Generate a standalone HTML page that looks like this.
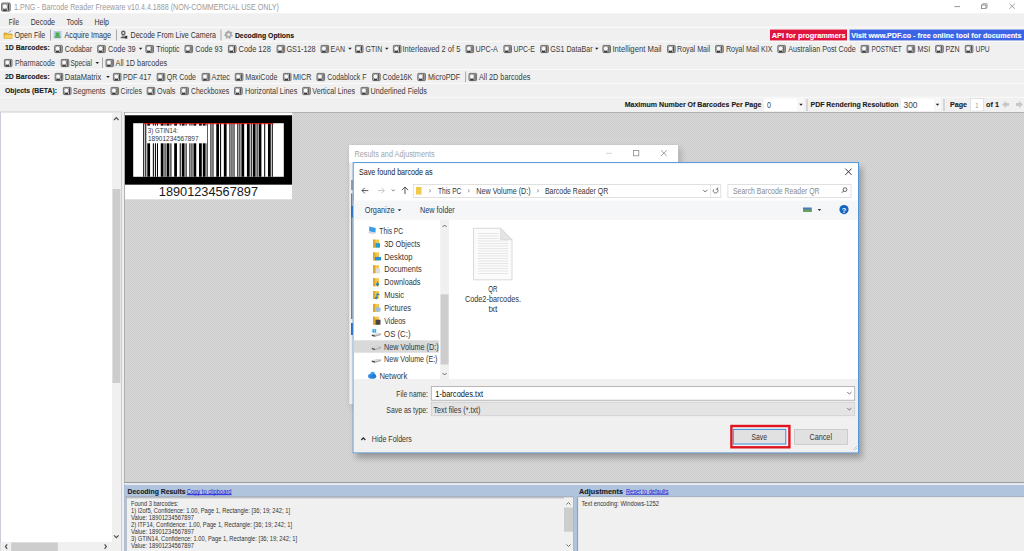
<!DOCTYPE html>
<html><head><meta charset="utf-8"><title>Barcode Reader</title>
<style>html,body{margin:0;padding:0;width:1024px;height:551px;overflow:hidden;background:#f0f0f0;}
svg text{font-family:"Liberation Sans",sans-serif;}</style></head><body>
<svg width="1024" height="551" viewBox="0 0 1024 551" style="display:block">
<defs>
<g id="bci">
 <rect x="0.4" y="0.4" width="7.6" height="7.2" rx="0.8" fill="#c4c4c4" stroke="#4a4a4a" stroke-width="0.75"/>
 <circle cx="3.3" cy="3.5" r="2.4" fill="#f8f8f8" stroke="#6a6a6a" stroke-width="0.6"/>
 <rect x="6" y="1.1" width="0.9" height="5.8" fill="#3a3a3a"/>
 <rect x="1.6" y="6.1" width="3.4" height="1.2" fill="#2a2a2a"/>
</g>
<pattern id="chk" width="2" height="2" patternUnits="userSpaceOnUse">
 <rect width="2" height="2" fill="#d9d9d9"/>
 <rect width="1" height="1" fill="#cbcbcb"/><rect x="1" y="1" width="1" height="1" fill="#cbcbcb"/>
</pattern>
<filter id="sh" x="-10%" y="-10%" width="120%" height="120%"><feGaussianBlur stdDeviation="3"/></filter>
</defs>
<rect x="0" y="0" width="1024" height="13.5" fill="#ffffff" />
<use href="#bci" transform="translate(1.2,2.6) scale(1.12)"/>
<text x="14" y="10.2" font-size="8.6" fill="#9a9a9a" textLength="265.0" lengthAdjust="spacingAndGlyphs" font-family="Liberation Sans" >1.PNG - Barcode Reader Freeware v10.4.4.1888 (NON-COMMERCIAL USE ONLY)</text>
<line x1="954.4" y1="6.6" x2="960" y2="6.6" stroke="#8a8a8a" stroke-width="0.9" />
<path d="M982.8,4.8 L982.8,3.8 L987.1,3.8 L987.1,7.6 L986.2,7.6" fill="none" stroke="#8a8a8a" stroke-width="0.8"/><rect x="981.5" y="5" width="4.4" height="3.6" fill="none" stroke="#8a8a8a" stroke-width="0.9"/>
<path d="M1009.4,3.6 L1015,8.8 M1015,3.6 L1009.4,8.8" stroke="#8a8a8a" stroke-width="0.8"/>
<rect x="0" y="13.5" width="1024" height="98.5" fill="#f0f0f0" />
<text x="8.8" y="24.6" font-size="8.2" fill="#353535" textLength="10.2" lengthAdjust="spacingAndGlyphs" font-family="Liberation Sans" >File</text>
<text x="30.8" y="24.6" font-size="8.2" fill="#353535" textLength="24.2" lengthAdjust="spacingAndGlyphs" font-family="Liberation Sans" >Decode</text>
<text x="66.6" y="24.6" font-size="8.2" fill="#353535" textLength="16.2" lengthAdjust="spacingAndGlyphs" font-family="Liberation Sans" >Tools</text>
<text x="94.5" y="24.6" font-size="8.2" fill="#353535" textLength="14.5" lengthAdjust="spacingAndGlyphs" font-family="Liberation Sans" >Help</text>
<rect x="0" y="26.7" width="1024" height="1" fill="#fbfbfb" />
<rect x="0" y="40.9" width="1024" height="1" fill="#fbfbfb" />
<rect x="0" y="68.9" width="1024" height="1" fill="#fbfbfb" />
<rect x="0" y="83.0" width="1024" height="1" fill="#fbfbfb" />
<rect x="0" y="96.8" width="1024" height="1" fill="#fbfbfb" />
<g transform="translate(3.5,30)"><path d="M0.5,3 L3.5,3 L4.5,4 L8.5,4 L8.5,8.5 L0.5,8.5 Z" fill="#e8b830" stroke="#b08010" stroke-width="0.5"/><path d="M1.5,5 L9.5,5 L8.5,8.5 L0.5,8.5 Z" fill="#f5d060"/><path d="M5,2.5 L8,0.5" stroke="#8aa0c8" stroke-width="1"/></g>
<text x="14.6" y="38" font-size="8.5" fill="#333" textLength="30.7" lengthAdjust="spacingAndGlyphs" font-family="Liberation Sans" >Open File</text>
<line x1="50.5" y1="29.5" x2="50.5" y2="40.5" stroke="#a8a8a8" stroke-width="1" />
<g transform="translate(53.5,31)"><rect x="0" y="0" width="8" height="7.5" fill="#b8cce8"/><rect x="2" y="1.5" width="4" height="4" fill="#48b048"/><rect x="1" y="5.5" width="6" height="1.2" fill="#3a9a3a"/></g>
<text x="64.5" y="38" font-size="8.5" fill="#333" textLength="46.5" lengthAdjust="spacingAndGlyphs" font-family="Liberation Sans" >Acquire Image</text>
<line x1="116.5" y1="29.5" x2="116.5" y2="40.5" stroke="#a8a8a8" stroke-width="1" />
<g transform="translate(120,30.3)"><circle cx="3.3" cy="2.6" r="2.3" fill="#606060"/><circle cx="3.3" cy="2.6" r="1" fill="#e8e8e8"/><path d="M1.5,5 L5,5 L4.3,6.5 L2.2,6.5 Z" fill="#888"/><rect x="0.8" y="6.6" width="5" height="1.3" fill="#505050"/><rect x="4.8" y="5.5" width="2.5" height="2.8" fill="#3a3a3a"/></g>
<text x="130.5" y="38" font-size="8.5" fill="#333" textLength="85.5" lengthAdjust="spacingAndGlyphs" font-family="Liberation Sans" >Decode From Live Camera</text>
<line x1="221" y1="29.5" x2="221" y2="40.5" stroke="#a8a8a8" stroke-width="1" />
<g transform="translate(228.6,34.6)"><path d="M-0.8,-4.2 H0.8 L1.1,-3 L2.3,-2.5 L3.3,-3.2 L3.9,-2.1 L3.1,-1.2 L3.2,0 L4.2,0.8 L3.8,1.9 L2.6,1.8 L1.8,2.8 L2.1,4 L0.8,4.3 L0.2,3.2 L-1,3.2 L-1.7,4.2 L-2.9,3.6 L-2.6,2.4 L-3.4,1.5 L-4.3,1.2 L-4.2,0 L-3.2,-0.6 L-3.4,-1.8 L-2.6,-2.8 L-1.4,-2.9 Z" fill="#a8a8a8"/><circle r="1.7" fill="#e4e4e4"/></g>
<text x="234.9" y="37.7" font-size="8.0" fill="#111" font-weight="bold" stroke="#111" stroke-width="0.1" textLength="59.1" lengthAdjust="spacingAndGlyphs" font-family="Liberation Sans" >Decoding Options</text>
<rect x="770" y="29.6" width="77" height="10.8" fill="#e0143c" />
<text x="771.8" y="38.1" font-size="7.5" fill="#ffffff" font-weight="bold" stroke="#ffffff" stroke-width="0.1" textLength="73.7" lengthAdjust="spacingAndGlyphs" font-family="Liberation Sans" >API for programmers</text>
<rect x="849.6" y="29.6" width="174.4" height="10.8" fill="#3c64e6" />
<text x="851.3" y="38.1" font-size="7.5" fill="#ffffff" font-weight="bold" stroke="#ffffff" stroke-width="0.1" textLength="170.2" lengthAdjust="spacingAndGlyphs" font-family="Liberation Sans" >Visit www.PDF.co - free online tool for documents</text>
<text x="5" y="49.8" font-size="7.3" fill="#1a1a1a" font-weight="bold" stroke="#1a1a1a" stroke-width="0.1" textLength="44.8" lengthAdjust="spacingAndGlyphs" font-family="Liberation Sans" >1D Barcodes:</text>
<use href="#bci" x="54.3" y="45.0"/>
<text x="64.8" y="51.7" font-size="8.5" fill="#3a3a3a" textLength="27.4" lengthAdjust="spacingAndGlyphs" font-family="Liberation Sans" >Codabar</text>
<use href="#bci" x="97.3" y="45.0"/>
<text x="108" y="51.7" font-size="8.5" fill="#3a3a3a" textLength="27.7" lengthAdjust="spacingAndGlyphs" font-family="Liberation Sans" >Code 39</text>
<path d="M138.79999999999998,47.7 L142.4,47.7 L140.6,49.7 Z" fill="#222"/>
<use href="#bci" x="145.5" y="45.0"/>
<text x="156.25" y="51.7" font-size="8.5" fill="#3a3a3a" textLength="23.4" lengthAdjust="spacingAndGlyphs" font-family="Liberation Sans" >Trioptic</text>
<use href="#bci" x="184.6" y="45.0"/>
<text x="195.3" y="51.7" font-size="8.5" fill="#3a3a3a" textLength="27.3" lengthAdjust="spacingAndGlyphs" font-family="Liberation Sans" >Code 93</text>
<use href="#bci" x="228" y="45.0"/>
<text x="238.5" y="51.7" font-size="8.5" fill="#3a3a3a" textLength="32.3" lengthAdjust="spacingAndGlyphs" font-family="Liberation Sans" >Code 128</text>
<use href="#bci" x="276.7" y="45.0"/>
<text x="286.4" y="51.7" font-size="8.5" fill="#3a3a3a" textLength="29.2" lengthAdjust="spacingAndGlyphs" font-family="Liberation Sans" >GS1-128</text>
<use href="#bci" x="320.6" y="45.0"/>
<text x="330.6" y="51.7" font-size="8.5" fill="#3a3a3a" textLength="14.4" lengthAdjust="spacingAndGlyphs" font-family="Liberation Sans" >EAN</text>
<path d="M348.2,47.7 L351.8,47.7 L350,49.7 Z" fill="#222"/>
<use href="#bci" x="355" y="45.0"/>
<text x="365.6" y="51.7" font-size="8.5" fill="#3a3a3a" textLength="16.6" lengthAdjust="spacingAndGlyphs" font-family="Liberation Sans" >GTIN</text>
<path d="M385.0,47.7 L388.6,47.7 L386.8,49.7 Z" fill="#222"/>
<use href="#bci" x="393" y="45.0"/>
<text x="402.5" y="51.7" font-size="8.5" fill="#3a3a3a" textLength="57.8" lengthAdjust="spacingAndGlyphs" font-family="Liberation Sans" >Interleaved 2 of 5</text>
<use href="#bci" x="465.6" y="45.0"/>
<text x="475.5" y="51.7" font-size="8.5" fill="#3a3a3a" textLength="22.3" lengthAdjust="spacingAndGlyphs" font-family="Liberation Sans" >UPC-A</text>
<use href="#bci" x="503.5" y="45.0"/>
<text x="513.4" y="51.7" font-size="8.5" fill="#3a3a3a" textLength="21.6" lengthAdjust="spacingAndGlyphs" font-family="Liberation Sans" >UPC-E</text>
<use href="#bci" x="540.3" y="45.0"/>
<text x="550.3" y="51.7" font-size="8.5" fill="#3a3a3a" textLength="42.2" lengthAdjust="spacingAndGlyphs" font-family="Liberation Sans" >GS1 DataBar</text>
<path d="M595.0,47.7 L598.5999999999999,47.7 L596.8,49.7 Z" fill="#222"/>
<use href="#bci" x="602.5" y="45.0"/>
<text x="612.4" y="51.7" font-size="8.5" fill="#3a3a3a" textLength="49.2" lengthAdjust="spacingAndGlyphs" font-family="Liberation Sans" >Intelligent Mail</text>
<use href="#bci" x="667.2" y="45.0"/>
<text x="677" y="51.7" font-size="8.5" fill="#3a3a3a" textLength="33.2" lengthAdjust="spacingAndGlyphs" font-family="Liberation Sans" >Royal Mail</text>
<use href="#bci" x="715.3" y="45.0"/>
<text x="726" y="51.7" font-size="8.5" fill="#3a3a3a" textLength="46.4" lengthAdjust="spacingAndGlyphs" font-family="Liberation Sans" >Royal Mail KIX</text>
<use href="#bci" x="777.4" y="45.0"/>
<text x="788.2" y="51.7" font-size="8.5" fill="#3a3a3a" textLength="67.5" lengthAdjust="spacingAndGlyphs" font-family="Liberation Sans" >Australian Post Code</text>
<use href="#bci" x="860.7" y="45.0"/>
<text x="871.5" y="51.7" font-size="8.5" fill="#3a3a3a" textLength="30.2" lengthAdjust="spacingAndGlyphs" font-family="Liberation Sans" >POSTNET</text>
<use href="#bci" x="906.7" y="45.0"/>
<text x="917.5" y="51.7" font-size="8.5" fill="#3a3a3a" textLength="12.7" lengthAdjust="spacingAndGlyphs" font-family="Liberation Sans" >MSI</text>
<use href="#bci" x="935.3" y="45.0"/>
<text x="945.4" y="51.7" font-size="8.5" fill="#3a3a3a" textLength="14.1" lengthAdjust="spacingAndGlyphs" font-family="Liberation Sans" >PZN</text>
<use href="#bci" x="964.9" y="45.0"/>
<text x="975.6" y="51.7" font-size="8.5" fill="#3a3a3a" textLength="14.1" lengthAdjust="spacingAndGlyphs" font-family="Liberation Sans" >UPU</text>
<use href="#bci" x="4" y="59.0"/>
<text x="15" y="65.9" font-size="8.5" fill="#3a3a3a" textLength="39.8" lengthAdjust="spacingAndGlyphs" font-family="Liberation Sans" >Pharmacode</text>
<use href="#bci" x="60.8" y="59.0"/>
<text x="70.4" y="65.9" font-size="8.5" fill="#3a3a3a" textLength="21.6" lengthAdjust="spacingAndGlyphs" font-family="Liberation Sans" >Special</text>
<path d="M95.5,61.900000000000006 L99.1,61.900000000000006 L97.3,63.900000000000006 Z" fill="#222"/>
<use href="#bci" x="105.6" y="59.0"/>
<text x="115.6" y="65.9" font-size="8.5" fill="#3a3a3a" textLength="51.5" lengthAdjust="spacingAndGlyphs" font-family="Liberation Sans" >All 1D barcodes</text>
<line x1="102.5" y1="57.5" x2="102.5" y2="68" stroke="#a8a8a8" stroke-width="1" />
<text x="5" y="79" font-size="7.3" fill="#1a1a1a" font-weight="bold" stroke="#1a1a1a" stroke-width="0.1" textLength="44.8" lengthAdjust="spacingAndGlyphs" font-family="Liberation Sans" >2D Barcodes:</text>
<use href="#bci" x="54.8" y="73.0"/>
<text x="64.8" y="79.9" font-size="8.5" fill="#3a3a3a" textLength="36.5" lengthAdjust="spacingAndGlyphs" font-family="Liberation Sans" >DataMatrix</text>
<path d="M106.2,75.9 L109.8,75.9 L108,77.9 Z" fill="#222"/>
<use href="#bci" x="113" y="73.0"/>
<text x="123" y="79.9" font-size="8.5" fill="#3a3a3a" textLength="28.2" lengthAdjust="spacingAndGlyphs" font-family="Liberation Sans" >PDF 417</text>
<use href="#bci" x="156.8" y="73.0"/>
<text x="166.8" y="79.9" font-size="8.5" fill="#3a3a3a" textLength="29.2" lengthAdjust="spacingAndGlyphs" font-family="Liberation Sans" >QR Code</text>
<use href="#bci" x="201.7" y="73.0"/>
<text x="211.6" y="79.9" font-size="8.5" fill="#3a3a3a" textLength="18.4" lengthAdjust="spacingAndGlyphs" font-family="Liberation Sans" >Aztec</text>
<use href="#bci" x="234.9" y="73.0"/>
<text x="245.2" y="79.9" font-size="8.5" fill="#3a3a3a" textLength="32.2" lengthAdjust="spacingAndGlyphs" font-family="Liberation Sans" >MaxiCode</text>
<use href="#bci" x="283" y="73.0"/>
<text x="293" y="79.9" font-size="8.5" fill="#3a3a3a" textLength="18.6" lengthAdjust="spacingAndGlyphs" font-family="Liberation Sans" >MICR</text>
<use href="#bci" x="316.6" y="73.0"/>
<text x="327.2" y="79.9" font-size="8.5" fill="#3a3a3a" textLength="39.4" lengthAdjust="spacingAndGlyphs" font-family="Liberation Sans" >Codablock F</text>
<use href="#bci" x="372.2" y="73.0"/>
<text x="382.5" y="79.9" font-size="8.5" fill="#3a3a3a" textLength="29.9" lengthAdjust="spacingAndGlyphs" font-family="Liberation Sans" >Code16K</text>
<use href="#bci" x="417.4" y="73.0"/>
<text x="428" y="79.9" font-size="8.5" fill="#3a3a3a" textLength="32.3" lengthAdjust="spacingAndGlyphs" font-family="Liberation Sans" >MicroPDF</text>
<use href="#bci" x="468.6" y="73.0"/>
<text x="478.9" y="79.9" font-size="8.5" fill="#3a3a3a" textLength="51.5" lengthAdjust="spacingAndGlyphs" font-family="Liberation Sans" >All 2D barcodes</text>
<line x1="465.6" y1="71.5" x2="465.6" y2="82" stroke="#a8a8a8" stroke-width="1" />
<text x="5" y="92.8" font-size="7.3" fill="#1a1a1a" font-weight="bold" stroke="#1a1a1a" stroke-width="0.1" textLength="52.0" lengthAdjust="spacingAndGlyphs" font-family="Liberation Sans" >Objects (BETA):</text>
<use href="#bci" x="63" y="87.0"/>
<text x="73" y="93.9" font-size="8.5" fill="#3a3a3a" textLength="32.3" lengthAdjust="spacingAndGlyphs" font-family="Liberation Sans" >Segments</text>
<use href="#bci" x="110.6" y="87.0"/>
<text x="120.6" y="93.9" font-size="8.5" fill="#3a3a3a" textLength="21.3" lengthAdjust="spacingAndGlyphs" font-family="Liberation Sans" >Circles</text>
<use href="#bci" x="146.8" y="87.0"/>
<text x="157.1" y="93.9" font-size="8.5" fill="#3a3a3a" textLength="18.3" lengthAdjust="spacingAndGlyphs" font-family="Liberation Sans" >Ovals</text>
<use href="#bci" x="180.4" y="87.0"/>
<text x="191" y="93.9" font-size="8.5" fill="#3a3a3a" textLength="38.2" lengthAdjust="spacingAndGlyphs" font-family="Liberation Sans" >Checkboxes</text>
<use href="#bci" x="234.2" y="87.0"/>
<text x="244.9" y="93.9" font-size="8.5" fill="#3a3a3a" textLength="52.4" lengthAdjust="spacingAndGlyphs" font-family="Liberation Sans" >Horizontal Lines</text>
<use href="#bci" x="302.3" y="87.0"/>
<text x="312.3" y="93.9" font-size="8.5" fill="#3a3a3a" textLength="42.7" lengthAdjust="spacingAndGlyphs" font-family="Liberation Sans" >Vertical Lines</text>
<use href="#bci" x="360.6" y="87.0"/>
<text x="370.6" y="93.9" font-size="8.5" fill="#3a3a3a" textLength="56.4" lengthAdjust="spacingAndGlyphs" font-family="Liberation Sans" >Underlined Fields</text>
<text x="624.7" y="107.3" font-size="7.3" fill="#1a1a1a" font-weight="bold" stroke="#1a1a1a" stroke-width="0.1" textLength="136.8" lengthAdjust="spacingAndGlyphs" font-family="Liberation Sans" >Maximum Number Of Barcodes Per Page</text>
<rect x="764" y="98.5" width="40" height="12.5" fill="#ffffff" />
<text x="767" y="107.8" font-size="8.2" fill="#444" textLength="4.0" lengthAdjust="spacingAndGlyphs" font-family="Liberation Sans" >0</text>
<rect x="797" y="98.5" width="7" height="12.5" fill="#f7f7f7" />
<path d="M799.2,103.8 L802.8,103.8 L801,105.8 Z" fill="#222"/>
<line x1="807" y1="99" x2="807" y2="111" stroke="#bdbdbd" stroke-width="1" />
<text x="810.5" y="107.3" font-size="7.3" fill="#1a1a1a" font-weight="bold" stroke="#1a1a1a" stroke-width="0.1" textLength="87.9" lengthAdjust="spacingAndGlyphs" font-family="Liberation Sans" >PDF Rendering Resolution</text>
<rect x="901" y="98.5" width="40" height="12.5" fill="#ffffff" />
<text x="903.5" y="107.8" font-size="8.2" fill="#444" textLength="14.0" lengthAdjust="spacingAndGlyphs" font-family="Liberation Sans" >300</text>
<rect x="934" y="98.5" width="7" height="12.5" fill="#f7f7f7" />
<path d="M935.7,103.8 L939.3,103.8 L937.5,105.8 Z" fill="#222"/>
<line x1="944" y1="99" x2="944" y2="111" stroke="#bdbdbd" stroke-width="1" />
<text x="950" y="107.3" font-size="7.3" fill="#1a1a1a" font-weight="bold" stroke="#1a1a1a" stroke-width="0.1" textLength="17.0" lengthAdjust="spacingAndGlyphs" font-family="Liberation Sans" >Page</text>
<rect x="970.5" y="98.5" width="13" height="12.5" fill="#ffffff" stroke="#dcdcdc" stroke-width="0.8"/>
<text x="975.3" y="107.8" font-size="7.5" fill="#999" textLength="3.2" lengthAdjust="spacingAndGlyphs" font-family="Liberation Sans" >1</text>
<text x="986" y="107.3" font-size="7.3" fill="#1a1a1a" font-weight="bold" stroke="#1a1a1a" stroke-width="0.1" textLength="13.0" lengthAdjust="spacingAndGlyphs" font-family="Liberation Sans" >of 1</text>
<path d="M1002,104.5 L1006,101 L1006,103 L1009,103 L1009,106 L1006,106 L1006,108 Z" fill="#c8c8c8"/>
<path d="M1023,104.5 L1019,101 L1019,103 L1016,103 L1016,106 L1019,106 L1019,108 Z" fill="#c8c8c8"/>
<rect x="0" y="111.5" width="1024" height="439.5" fill="#f0f0f0" />
<rect x="0" y="112" width="112" height="430.2" fill="#ffffff" />
<line x1="0" y1="112" x2="121.5" y2="112" stroke="#c9ced6" stroke-width="1" />
<line x1="0.5" y1="112" x2="0.5" y2="551" stroke="#c9ced6" stroke-width="1" />
<rect x="112" y="112.5" width="9" height="428" fill="#f0f0f0" />
<rect x="112.5" y="189" width="7.8" height="194" fill="#cdcdcd" />
<path d="M114,120 L116.3,117.7 L118.6,120" fill="none" stroke="#505050" stroke-width="1.2"/>
<path d="M114,535.3 L116.3,537.6 L118.6,535.3" fill="none" stroke="#505050" stroke-width="1.2"/>
<line x1="121.5" y1="112" x2="121.5" y2="551" stroke="#c9ced6" stroke-width="1" />
<rect x="0.5" y="542.2" width="111.5" height="9" fill="#f0f0f0" />
<rect x="11.2" y="542.5" width="46.6" height="8.5" fill="#cdcdcd" />
<path d="M7.2,544.3 L5.4,546.6 L7.2,548.9" fill="none" stroke="#505050" stroke-width="1.2"/>
<path d="M104.6,544.3 L106.4,546.6 L104.6,548.9" fill="none" stroke="#505050" stroke-width="1.2"/>
<rect x="124" y="112.5" width="900" height="370" fill="url(#chk)" />
<line x1="124" y1="112.5" x2="1024" y2="112.5" stroke="#b0b0b0" stroke-width="1" />
<line x1="124.5" y1="112.5" x2="124.5" y2="483" stroke="#8a8a8a" stroke-width="1" stroke-dasharray="1 1"/>
<line x1="124" y1="482.5" x2="1024" y2="482.5" stroke="#9c9c9c" stroke-width="1" />
<rect x="124" y="483" width="900" height="2" fill="#e6eaee" />
<rect x="125" y="112.8" width="167.3" height="2.6" fill="#ffffff" />
<rect x="125" y="115.3" width="167" height="69.5" fill="#000000" />
<rect x="133.2" y="123.2" width="150.6" height="53.6" fill="#ffffff" />
<rect x="125" y="184.8" width="167" height="14.5" fill="#ffffff" />
<text x="158.8" y="195.8" font-size="12.4" fill="#1a1a1a" textLength="99.2" lengthAdjust="spacingAndGlyphs" font-family="Liberation Sans" >18901234567897</text>
<path d="M143.20,123.2h1.03v53.6h-1.03z M145.25,123.2h1.03v53.6h-1.03z M147.30,123.2h2.77v53.6h-2.77z M152.85,123.2h1.03v53.6h-1.03z M154.90,123.2h1.03v53.6h-1.03z M156.95,123.2h1.03v53.6h-1.03z M160.75,123.2h2.77v53.6h-2.77z M164.54,123.2h1.03v53.6h-1.03z M166.60,123.2h2.77v53.6h-2.77z M170.39,123.2h1.03v53.6h-1.03z M174.19,123.2h2.77v53.6h-2.77z M179.73,123.2h1.03v53.6h-1.03z M181.78,123.2h2.77v53.6h-2.77z M185.58,123.2h1.03v53.6h-1.03z M189.38,123.2h1.03v53.6h-1.03z M191.43,123.2h1.03v53.6h-1.03z M193.48,123.2h2.77v53.6h-2.77z M199.02,123.2h2.77v53.6h-2.77z M202.82,123.2h2.77v53.6h-2.77z M206.61,123.2h1.03v53.6h-1.03z M210.41,123.2h1.03v53.6h-1.03z M212.46,123.2h1.03v53.6h-1.03z M216.26,123.2h2.77v53.6h-2.77z M220.06,123.2h1.03v53.6h-1.03z M223.85,123.2h2.77v53.6h-2.77z M229.39,123.2h1.03v53.6h-1.03z M231.45,123.2h1.03v53.6h-1.03z M233.50,123.2h1.03v53.6h-1.03z M237.30,123.2h1.03v53.6h-1.03z M239.35,123.2h1.03v53.6h-1.03z M241.40,123.2h2.77v53.6h-2.77z M246.94,123.2h2.77v53.6h-2.77z M250.74,123.2h1.03v53.6h-1.03z M252.79,123.2h2.77v53.6h-2.77z M256.59,123.2h1.03v53.6h-1.03z M258.64,123.2h2.77v53.6h-2.77z M264.18,123.2h1.03v53.6h-1.03z M267.98,123.2h2.77v53.6h-2.77z M271.77,123.2h1.03v53.6h-1.03z" fill="#000"/>
<rect x="143.5" y="123.2" width="130" height="1.0" fill="#e01010" />
<rect x="147" y="125.6" width="60" height="17.7" fill="#ffffff" />
<text x="147.8" y="132.7" font-size="6.8" fill="#3a3a3a" textLength="30.2" lengthAdjust="spacingAndGlyphs" font-family="Liberation Sans" >3) GTIN14:</text>
<text x="148" y="141.4" font-size="6.8" fill="#3a3a3a" textLength="50.6" lengthAdjust="spacingAndGlyphs" font-family="Liberation Sans" >18901234567897</text>
<rect x="124" y="485" width="451" height="11.2" fill="#b0c4de" />
<rect x="124" y="496" width="451" height="1.4" fill="#a7b3c3" />
<rect x="577" y="485" width="447" height="11.2" fill="#b0c4de" />
<rect x="577" y="496" width="447" height="1.4" fill="#a7b3c3" />
<rect x="124" y="497.3" width="451" height="54" fill="#f0f0f0" />
<line x1="124.5" y1="484" x2="124.5" y2="551" stroke="#a9bdd6" stroke-width="1" />
<line x1="126" y1="497.3" x2="126" y2="551" stroke="#9aa0a8" stroke-width="1.2" />
<line x1="126" y1="497.8" x2="575" y2="497.8" stroke="#9aa0a8" stroke-width="0.8" />
<rect x="574" y="485" width="3" height="67" fill="#b0c4de" />
<text x="127.6" y="493.9" font-size="7.3" fill="#1a1a1a" font-weight="bold" stroke="#1a1a1a" stroke-width="0.1" textLength="57.9" lengthAdjust="spacingAndGlyphs" font-family="Liberation Sans" >Decoding Results</text>
<text x="186.8" y="493.5" font-size="6.3" fill="#1b1bdc" textLength="44.7" lengthAdjust="spacingAndGlyphs" font-family="Liberation Sans" text-decoration="underline">Copy to clipboard</text>
<line x1="186.8" y1="494.5" x2="231.5" y2="494.5" stroke="#1b1bdc" stroke-width="0.6" />
<text x="131" y="506.0" font-size="6.5" fill="#333" textLength="47.3" lengthAdjust="spacingAndGlyphs" font-family="Liberation Sans" >Found 3 barcodes:</text>
<text x="131" y="513.0" font-size="6.5" fill="#333" textLength="159.0" lengthAdjust="spacingAndGlyphs" font-family="Liberation Sans" >1) I2of5, Confidence: 1.00, Page 1, Rectangle: [36; 19; 242; 1]</text>
<text x="131" y="520.0" font-size="6.5" fill="#333" textLength="63.0" lengthAdjust="spacingAndGlyphs" font-family="Liberation Sans" >Value: 18901234567897</text>
<text x="131" y="527.0" font-size="6.5" fill="#333" textLength="161.0" lengthAdjust="spacingAndGlyphs" font-family="Liberation Sans" >2) ITF14, Confidence: 1.00, Page 1, Rectangle: [36; 19; 242; 1]</text>
<text x="131" y="534.0" font-size="6.5" fill="#333" textLength="63.0" lengthAdjust="spacingAndGlyphs" font-family="Liberation Sans" >Value: 18901234567897</text>
<text x="131" y="541.0" font-size="6.5" fill="#333" textLength="166.0" lengthAdjust="spacingAndGlyphs" font-family="Liberation Sans" >3) GTIN14, Confidence: 1.00, Page 1, Rectangle: [36; 19; 242; 1]</text>
<text x="131" y="548.0" font-size="6.5" fill="#333" textLength="63.0" lengthAdjust="spacingAndGlyphs" font-family="Liberation Sans" >Value: 18901234567897</text>
<rect x="564" y="497.5" width="9" height="54" fill="#f0f0f0" />
<rect x="564" y="507.5" width="9" height="24.2" fill="#cdcdcd" />
<path d="M566.5,504.5 L568.5,502.5 L570.5,504.5" fill="none" stroke="#606060" stroke-width="0.9"/>
<path d="M566.5,544.5 L568.5,546.5 L570.5,544.5" fill="none" stroke="#606060" stroke-width="0.9"/>
<line x1="573.5" y1="497.3" x2="573.5" y2="551" stroke="#b0b8c4" stroke-width="1" />
<rect x="577" y="497.3" width="447" height="54" fill="#f0f0f0" />
<line x1="577.5" y1="497.3" x2="577.5" y2="551" stroke="#9aa0a8" stroke-width="1.2" />
<text x="579" y="493.9" font-size="7.3" fill="#1a1a1a" font-weight="bold" stroke="#1a1a1a" stroke-width="0.1" textLength="44.0" lengthAdjust="spacingAndGlyphs" font-family="Liberation Sans" >Adjustments</text>
<text x="626" y="493.5" font-size="6.3" fill="#1b1bdc" textLength="42.5" lengthAdjust="spacingAndGlyphs" font-family="Liberation Sans" >Reset to defaults</text>
<line x1="626" y1="494.5" x2="668.5" y2="494.5" stroke="#1b1bdc" stroke-width="0.6" />
<text x="581.4" y="505.8" font-size="6.5" fill="#333" textLength="77.6" lengthAdjust="spacingAndGlyphs" font-family="Liberation Sans" >Text encoding: Windows-1252</text>
<rect x="351" y="148" width="330" height="259" fill="#000" opacity="0.18" filter="url(#sh)"/>
<rect x="349" y="145" width="329" height="259.5" fill="#f0f0f0" stroke="#c8c8c8" stroke-width="0.6"/>
<rect x="349" y="145" width="329" height="17.5" fill="#ffffff" />
<text x="354.5" y="156.6" font-size="8.4" fill="#a5a5a5" textLength="80.2" lengthAdjust="spacingAndGlyphs" font-family="Liberation Sans" >Results and Adjustments</text>
<line x1="606" y1="153.3" x2="612" y2="153.3" stroke="#c8c8c8" stroke-width="0.8" />
<rect x="633.5" y="150.5" width="5.3" height="5.3" fill="none" stroke="#8a8a8a" stroke-width="0.8"/>
<path d="M661,150.3 L666.8,156 M666.8,150.3 L661,156" stroke="#8a8a8a" stroke-width="0.8"/>
<rect x="351" y="180" width="2" height="10" fill="#a0a0a0" />
<line x1="351.8" y1="193.5" x2="351.8" y2="319" stroke="#505050" stroke-width="1" />
<rect x="351" y="206" width="2" height="11.5" fill="#2a70d0" />
<rect x="351" y="323" width="2" height="12" fill="#2a70d0" />
<rect x="356" y="167" width="506" height="291" fill="#000" opacity="0.28" filter="url(#sh)"/>
<rect x="353.2" y="162.6" width="505.3" height="290.1" fill="#ffffff" stroke="#4f96dc" stroke-width="1"/>
<text x="358.9" y="175.3" font-size="8.4" fill="#1a1a1a" textLength="73.7" lengthAdjust="spacingAndGlyphs" font-family="Liberation Sans" >Save found barcode as</text>
<path d="M845.3,168.6 L851.6,174.9 M851.6,168.6 L845.3,174.9" stroke="#222" stroke-width="0.9"/>
<path d="M362,190.6 L368.3,190.6 M362,190.6 L364.8,187.8 M362,190.6 L364.8,193.4" fill="none" stroke="#444" stroke-width="0.9"/>
<path d="M384.3,190.6 L378,190.6 M384.3,190.6 L381.5,187.8 M384.3,190.6 L381.5,193.4" fill="none" stroke="#c0c0c0" stroke-width="0.9"/>
<path d="M391.8,189.6 L393.3,191.1 L394.8,189.6" fill="none" stroke="#555" stroke-width="0.8"/>
<path d="M405,194 L405,187 M401.8,190.2 L405,187 L408.2,190.2" fill="none" stroke="#444" stroke-width="0.9"/>
<rect x="413.3" y="184.4" width="307.5" height="13" fill="#ffffff" stroke="#d9d9d9" stroke-width="0.8"/>
<rect x="416" y="187" width="5.5" height="7.5" fill="#f0c84a" />
<path d="M429.3,189.3 L430.6,190.8 L429.3,192.3" fill="none" stroke="#666" stroke-width="0.7"/>
<text x="438" y="193.6" font-size="8.2" fill="#353535" textLength="23.3" lengthAdjust="spacingAndGlyphs" font-family="Liberation Sans" >This PC</text>
<path d="M468,189.3 L469.3,190.8 L468,192.3" fill="none" stroke="#666" stroke-width="0.7"/>
<text x="476.3" y="193.6" font-size="8.2" fill="#353535" textLength="54.4" lengthAdjust="spacingAndGlyphs" font-family="Liberation Sans" >New Volume (D:)</text>
<path d="M537.3,189.3 L538.6,190.8 L537.3,192.3" fill="none" stroke="#666" stroke-width="0.7"/>
<text x="544.9" y="193.6" font-size="8.2" fill="#353535" textLength="63.3" lengthAdjust="spacingAndGlyphs" font-family="Liberation Sans" >Barcode Reader QR</text>
<path d="M703,189.8 L705.2,192 L707.4,189.8" fill="none" stroke="#555" stroke-width="0.8"/>
<line x1="710.5" y1="185" x2="710.5" y2="197" stroke="#e2e2e2" stroke-width="0.8" />
<path d="M717.3,189 A2.4,2.4 0 1 1 713.5,189.5" fill="none" stroke="#555" stroke-width="0.8"/><path d="M717.8,187.3 L717.6,189.4 L715.6,189" fill="none" stroke="#555" stroke-width="0.7"/>
<rect x="727.9" y="184.4" width="123.1" height="13" fill="#ffffff" stroke="#d9d9d9" stroke-width="0.8"/>
<text x="733" y="193.6" font-size="8.2" fill="#8a8a8a" textLength="86.6" lengthAdjust="spacingAndGlyphs" font-family="Liberation Sans" >Search Barcode Reader QR</text>
<circle cx="845" cy="189.6" r="1.9" fill="none" stroke="#444" stroke-width="0.8"/><path d="M843.6,191 L841.8,192.8" stroke="#444" stroke-width="0.9"/>
<rect x="353.7" y="200.6" width="504.3" height="19.2" fill="#f5f6f7" />
<text x="364.7" y="213.1" font-size="8.2" fill="#1e395b" textLength="29.8" lengthAdjust="spacingAndGlyphs" font-family="Liberation Sans" >Organize</text>
<path d="M397.7,209.3 L401.3,209.3 L399.5,211.3 Z" fill="#1e395b"/>
<text x="419.9" y="213.1" font-size="8.2" fill="#1e395b" textLength="34.8" lengthAdjust="spacingAndGlyphs" font-family="Liberation Sans" >New folder</text>
<rect x="803" y="207.5" width="8.7" height="4.5" fill="#4a7ab8" />
<rect x="803" y="209.5" width="8.7" height="2.5" fill="#6aa060" />
<path d="M817.6,209 L821.1999999999999,209 L819.4,211 Z" fill="#333"/>
<circle cx="844" cy="209.6" r="4.6" fill="#1565c0"/>
<text x="844" y="212.6" font-size="7.5" font-weight="bold" fill="#fff" text-anchor="middle" font-family="Liberation Sans">?</text>
<rect x="353.7" y="219.8" width="86.5" height="159.3" fill="#ffffff" />
<rect x="440.2" y="219.8" width="8.8" height="159.3" fill="#f0f0f0" />
<rect x="440.6" y="294.3" width="8" height="70.2" fill="#cdcdcd" />
<path d="M442.6,227 L444.6,225 L446.6,227" fill="none" stroke="#606060" stroke-width="0.9"/>
<path d="M442.6,373 L444.6,375 L446.6,373" fill="none" stroke="#606060" stroke-width="0.9"/>
<rect x="353.7" y="340.3" width="85.3" height="12.4" fill="#d9d9d9" />
<g transform="translate(367.5,226.5)"><path d="M1.8,0 L8.2,1.6 L8,6.2 L1.6,4.8 Z" fill="#3a9ce8"/><path d="M0,6.2 L5.5,7.6 L8.5,6.6 L3,5.2 Z" fill="#d0d4da"/></g>
<text x="379.3" y="234.1" font-size="8.2" fill="#353535" textLength="23.9" lengthAdjust="spacingAndGlyphs" font-family="Liberation Sans" >This PC</text>
<g transform="translate(373,239.6)"><rect x="0" y="0" width="6" height="8" fill="#f3c64e"/><rect x="0" y="0" width="2.2" height="8" fill="#e0a82a"/><rect x="2.5" y="3.5" width="4.5" height="4.5" fill="#1c9fd8"/></g>
<text x="384.3" y="246.8" font-size="8.2" fill="#353535" textLength="35.9" lengthAdjust="spacingAndGlyphs" font-family="Liberation Sans" >3D Objects</text>
<g transform="translate(373,252.39999999999998)"><rect x="0" y="0" width="6" height="8" fill="#f3c64e"/><rect x="0" y="0" width="2.2" height="8" fill="#e0a82a"/><rect x="2" y="4.5" width="6" height="3.5" fill="#2390e0"/></g>
<text x="384.3" y="259.59999999999997" font-size="8.2" fill="#353535" textLength="28.2" lengthAdjust="spacingAndGlyphs" font-family="Liberation Sans" >Desktop</text>
<g transform="translate(373,265.2)"><rect x="0" y="0" width="6" height="8" fill="#f3c64e"/><rect x="0" y="0" width="2.2" height="8" fill="#e0a82a"/><rect x="3" y="3" width="4" height="5" fill="#d8dde4"/></g>
<text x="384.3" y="272.4" font-size="8.2" fill="#353535" textLength="37.4" lengthAdjust="spacingAndGlyphs" font-family="Liberation Sans" >Documents</text>
<g transform="translate(373,278.2)"><rect x="0" y="0" width="6" height="8" fill="#f3c64e"/><rect x="0" y="0" width="2.2" height="8" fill="#e0a82a"/><path d="M4.5,3.5 L4.5,7 M3,5.5 L4.5,7.5 L6,5.5" stroke="#1e7fd0" stroke-width="1.1" fill="none"/></g>
<text x="384.3" y="285.4" font-size="8.2" fill="#353535" textLength="36.2" lengthAdjust="spacingAndGlyphs" font-family="Liberation Sans" >Downloads</text>
<g transform="translate(373,291.0)"><rect x="0" y="0" width="6" height="8" fill="#f3c64e"/><rect x="0" y="0" width="2.2" height="8" fill="#e0a82a"/><path d="M4,2.5 L4,7 M4,2.5 L6.5,4" stroke="#1e7fd0" stroke-width="1.1" fill="none"/><circle cx="3.2" cy="7" r="1.2" fill="#1e7fd0"/></g>
<text x="384.3" y="298.2" font-size="8.2" fill="#353535" textLength="19.7" lengthAdjust="spacingAndGlyphs" font-family="Liberation Sans" >Music</text>
<g transform="translate(373,303.9)"><rect x="0" y="0" width="6" height="8" fill="#f3c64e"/><rect x="0" y="0" width="2.2" height="8" fill="#e0a82a"/><rect x="2.5" y="3.5" width="5" height="4.2" fill="#9ac0e0"/></g>
<text x="384.3" y="311.09999999999997" font-size="8.2" fill="#353535" textLength="26.7" lengthAdjust="spacingAndGlyphs" font-family="Liberation Sans" >Pictures</text>
<g transform="translate(373,316.7)"><rect x="0" y="0" width="6" height="8" fill="#f3c64e"/><rect x="0" y="0" width="2.2" height="8" fill="#e0a82a"/><rect x="2.5" y="3" width="5" height="5" fill="#444"/></g>
<text x="384.3" y="323.9" font-size="8.2" fill="#353535" textLength="21.3" lengthAdjust="spacingAndGlyphs" font-family="Liberation Sans" >Videos</text>
<g transform="translate(371.8,329.2)"><rect x="0.6" y="0" width="1.8" height="1.6" fill="#1aa0f0"/><rect x="2.6" y="0" width="1.8" height="1.6" fill="#1aa0f0"/><rect x="0.6" y="1.8" width="1.8" height="1.6" fill="#1aa0f0"/><rect x="2.6" y="1.8" width="1.8" height="1.6" fill="#1aa0f0"/><path d="M0,5.6 L5.8,4 L9.2,4.6 L3.4,6.4 Z" fill="#e4e4e4" stroke="#a0a0a0" stroke-width="0.3"/><path d="M0,5.6 L3.4,6.4 L3.4,7.6 L0,6.8 Z" fill="#3a3a3a"/><path d="M3.4,6.4 L9.2,4.6 L9.2,5.8 L3.4,7.6 Z" fill="#a8a8a8"/></g>
<text x="384.1" y="336.5" font-size="8.2" fill="#353535" textLength="26.4" lengthAdjust="spacingAndGlyphs" font-family="Liberation Sans" >OS (C:)</text>
<g transform="translate(371.8,342.5)"><path d="M0,5.6 L5.8,4 L9.2,4.6 L3.4,6.4 Z" fill="#e4e4e4" stroke="#a0a0a0" stroke-width="0.3"/><path d="M0,5.6 L3.4,6.4 L3.4,7.6 L0,6.8 Z" fill="#3a3a3a"/><path d="M3.4,6.4 L9.2,4.6 L9.2,5.8 L3.4,7.6 Z" fill="#a8a8a8"/></g>
<text x="384.1" y="349.6" font-size="8.2" fill="#353535" textLength="54.5" lengthAdjust="spacingAndGlyphs" font-family="Liberation Sans" >New Volume (D:)</text>
<g transform="translate(371.8,355.2)"><path d="M0,5.6 L5.8,4 L9.2,4.6 L3.4,6.4 Z" fill="#e4e4e4" stroke="#a0a0a0" stroke-width="0.3"/><path d="M0,5.6 L3.4,6.4 L3.4,7.6 L0,6.8 Z" fill="#3a3a3a"/><path d="M3.4,6.4 L9.2,4.6 L9.2,5.8 L3.4,7.6 Z" fill="#a8a8a8"/></g>
<text x="384.1" y="362.3" font-size="8.2" fill="#353535" textLength="53.4" lengthAdjust="spacingAndGlyphs" font-family="Liberation Sans" >New Volume (E:)</text>
<g transform="translate(368,371.5)"><circle cx="4.6" cy="2.6" r="2.4" fill="#3aa0ee"/><circle cx="2.2" cy="4.6" r="2.2" fill="#2a8ae0"/><circle cx="6" cy="4.8" r="2.2" fill="#1e78d0"/><rect x="2" y="5" width="4.5" height="2.2" fill="#2a84da"/></g>
<text x="379.4" y="379.2" font-size="8.2" fill="#353535" textLength="27.8" lengthAdjust="spacingAndGlyphs" font-family="Liberation Sans" >Network</text>
<path d="M473.5,228.3 L500.6,228.3 L512,239.7 L512,279.8 L473.5,279.8 Z" fill="#fbfbfb" stroke="#d0d0d0" stroke-width="0.8"/>
<path d="M500.6,228.3 L500.6,239.7 L512,239.7 Z" fill="#e4e4e4" stroke="#d0d0d0" stroke-width="0.6"/>
<path d="M478,233.5H499 M478,236.0H499 M478,238.5H499 M478,241.0H508 M478,243.5H508 M478,246.0H508 M478,248.5H508 M478,251.0H508 M478,253.5H508 M478,256.0H508 M478,258.5H508 M478,261.0H508 M478,263.5H508 M478,266.0H508 M478,268.5H508 M478,271.0H508 M478,273.5H508" stroke="#dedede" stroke-width="0.7"/>
<text x="488.3" y="292.2" font-size="8.2" fill="#333" textLength="9.3" lengthAdjust="spacingAndGlyphs" font-family="Liberation Sans" >QR</text>
<text x="464.9" y="302.3" font-size="8.2" fill="#333" textLength="56.1" lengthAdjust="spacingAndGlyphs" font-family="Liberation Sans" >Code2-barcodes.</text>
<text x="488.5" y="312.3" font-size="8.2" fill="#333" textLength="9.0" lengthAdjust="spacingAndGlyphs" font-family="Liberation Sans" >txt</text>
<rect x="353.7" y="379.1" width="504.3" height="73.2" fill="#f0f0f0" />
<text x="396.3" y="396.7" font-size="8.2" fill="#353535" textLength="31.7" lengthAdjust="spacingAndGlyphs" font-family="Liberation Sans" >File name:</text>
<rect x="431.3" y="386.5" width="423.4" height="13.7" fill="#ffffff" stroke="#a8a8a8" stroke-width="0.8"/>
<text x="435.3" y="396.7" font-size="8.2" fill="#111" textLength="47.7" lengthAdjust="spacingAndGlyphs" font-family="Liberation Sans" >1-barcodes.txt</text>
<path d="M847.3,392 L849.4,394.1 L851.5,392" fill="none" stroke="#555" stroke-width="0.8"/>
<text x="386.3" y="412.6" font-size="8.2" fill="#353535" textLength="41.7" lengthAdjust="spacingAndGlyphs" font-family="Liberation Sans" >Save as type:</text>
<rect x="431.3" y="402.3" width="423.4" height="13.4" fill="#e4e4e4" stroke="#cfcfcf" stroke-width="0.8"/>
<text x="433.5" y="412.6" font-size="8.2" fill="#353535" textLength="47.0" lengthAdjust="spacingAndGlyphs" font-family="Liberation Sans" >Text files (*.txt)</text>
<path d="M847.3,408 L849.4,410.1 L851.5,408" fill="none" stroke="#555" stroke-width="0.8"/>
<path d="M361.3,440 L363.3,437.9 L365.3,440" fill="none" stroke="#222" stroke-width="1.2"/>
<text x="371.8" y="441.6" font-size="8.2" fill="#353535" textLength="40.1" lengthAdjust="spacingAndGlyphs" font-family="Liberation Sans" >Hide Folders</text>
<rect x="731.4" y="426" width="58" height="21.3" fill="none" stroke="#e0141e" stroke-width="2.4"/>
<rect x="733.3" y="429.4" width="52.5" height="14.6" fill="#e1e1e1" stroke="#3c8ee0" stroke-width="1"/>
<text x="751.5" y="440.2" font-size="8.2" fill="#353535" textLength="15.5" lengthAdjust="spacingAndGlyphs" font-family="Liberation Sans" >Save</text>
<rect x="794.5" y="429.5" width="53" height="14.8" fill="#e1e1e1" stroke="#c4c4c4" stroke-width="0.8"/>
<text x="809.5" y="440.2" font-size="8.2" fill="#353535" textLength="22.5" lengthAdjust="spacingAndGlyphs" font-family="Liberation Sans" >Cancel</text>
<path d="M855,450 L857,448 M853,450 L857,446" stroke="#b0b0b0" stroke-width="0.6"/>
</svg>
</body></html>
